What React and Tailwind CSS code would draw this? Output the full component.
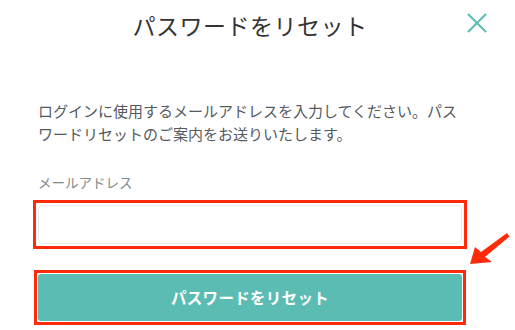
import React from "react";

export default function App() {
    return (
        <div
            className="relative w-[515px] h-[330px] bg-white overflow-hidden"
            style={{ fontFamily: '"Noto Sans CJK JP", "Noto Sans", sans-serif' }}
        >
            <div className="w-[424px] ml-[38px]">
                {/* header */}
                <div className="h-[50px] flex items-center justify-center">
                    <h1 className="text-[23px] leading-[30px] tracking-[0.5px] text-[#333333] font-normal">
                        パスワードをリセット
                    </h1>
                </div>

                <p className="mt-[49px] text-[15px] leading-[23px] text-[#555a5f]">
                    ログインに使用するメールアドレスを入力してください。パスワードリセットのご案内をお送りいたします。
                </p>

                <label className="block mt-[27px] text-[13.5px] leading-[20px] text-[#7d8c8e]">
                    メールアドレス
                </label>

                {/* red annotation box around the input */}
                <div className="mt-[8px] -mx-[5px] border-[3px] border-[#ff2a0a] p-[2px]">
                    <input
                        type="email"
                        className="block w-full h-[39px] rounded-[5px] border border-[#e6ebf1] bg-white outline-none"
                    />
                </div>

                <div className="mt-[21px] -mx-[4px] border-[3px] border-[#ff2a0a] p-[1px]">
                    <button className="block w-full h-[47px] rounded-[3px] bg-[#5bbcb4] text-white text-[15.5px] font-bold tracking-[0.3px]">
                        パスワードをリセット
                    </button>
                </div>
            </div>

            {/* close */}
            <button className="absolute left-[467px] top-[13px] w-[20px] h-[20px]">
                <svg viewBox="0 0 20 20" width="20" height="20">
                    <path d="M1 1 L19 19 M19 1 L1 19" stroke="#5bbcb4" strokeWidth="2" fill="none" />
                </svg>
            </button>

            {/* annotation arrow */}
            <svg className="absolute left-[462px] top-[228px]" width="53" height="45" viewBox="0 0 53 45">
                <polygon
                    points="8,36 13,19 19,24 45,5 47.5,8.5 23,29 30,34"
                    fill="#ff2a0a"
                />
            </svg>
        </div>
    );
}
